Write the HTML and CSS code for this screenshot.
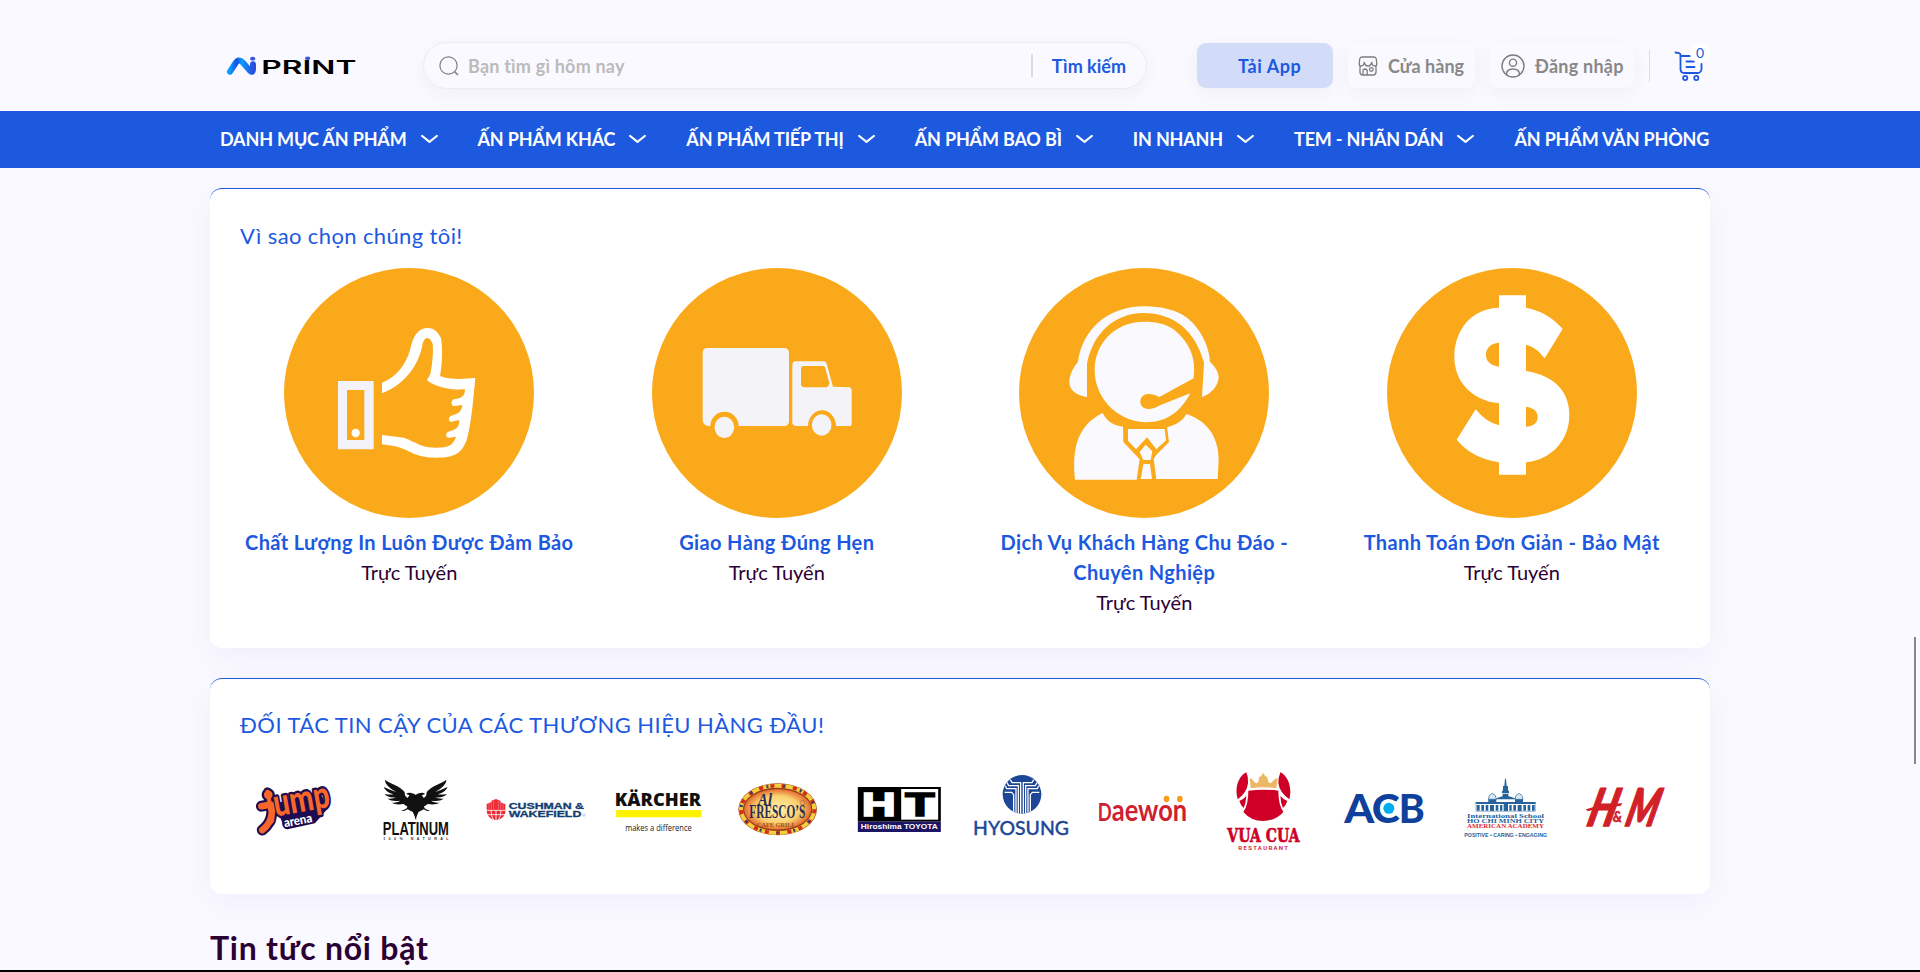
FILE: index.html
```html
<!DOCTYPE html>
<html lang="vi">
<head>
<meta charset="utf-8">
<title>AiPrint</title>
<link rel="stylesheet" href="styles.css">
</head>
<body>
<svg width="0" height="0" class="defs">
  <defs>
    <symbol id="chevron" viewBox="0 0 17 10"><path d="M1.2 2 L8.500 7.800 L15.800 2" fill="none" stroke="#fff" stroke-width="2.200" stroke-linecap="round" stroke-linejoin="round"/></symbol>
    <linearGradient id="mark" x1="0" y1="0" x2="1" y2="0"><stop offset="0" stop-color="#0a9cff"/><stop offset=".3" stop-color="#1450e0"/><stop offset=".5" stop-color="#0a9cff"/><stop offset="1" stop-color="#2a50e0"/></linearGradient>
  </defs>
</svg>

<header class="header">
  <div class="container header-row">
    <a class="logo">
      <svg width="132" height="20" viewBox="77 78 396 60">
        <path d="M89 125 L105 100 Q115 84 128 98 L149 122 Q158 130 158 118 L158 103" fill="none" stroke="url(#mark)" stroke-width="18" stroke-linecap="round" stroke-linejoin="round"/>
        <ellipse cx="157" cy="86" rx="8" ry="5.500" fill="#3a55dd"/>
        <text x="183" y="132" class="logo-text" textLength="285" lengthAdjust="spacingAndGlyphs">PRINT</text>
        <ellipse cx="322" cy="85" rx="8" ry="5.500" fill="#3a55dd"/>
      </svg>
    </a>
    <div class="search">
      <svg width="20" height="20" viewBox="0 0 20 20" fill="none" stroke="#808080" stroke-width="1.2"><circle cx="9.5" cy="9.5" r="8.6"/><path d="M15.5 15.5 L19 19" stroke-width="1.6"/></svg>
      <span class="placeholder">Bạn tìm gì hôm nay</span>
      <span class="search-divider"></span>
      <span class="search-button">Tìm kiếm</span>
    </div>
    <div class="actions">
      <a class="button button-app">Tải App</a>
      <a class="button button-store">
        <svg width="20" height="20" viewBox="0 0 20 20" fill="none" stroke="#7d7d7d" stroke-width="1.3"><path d="M4 1 H16 Q18 1 18.3 3 L18.8 8 Q18.8 10 17 10 M4 1 Q2 1 1.7 3 L1.2 8 Q1.2 10 3 10 M2 9 V16 Q2 19 5 19 H15 Q18 19 18 16 V9"/><path d="M3 10 Q6 10 6.2 6 Q7 10 10 10 Q13 10 13.8 6 Q14 10 17 10"/><path d="M5 19 V15.5 Q5 13 7 13 Q9.200 13 9.200 15.500 V19"/><circle cx="13.300" cy="13.500" r="1.800"/></svg>
        Cửa hàng
      </a>
      <a class="button button-login">
        <svg width="24" height="24" viewBox="0 0 24 24" fill="none" stroke="#7d7d7d" stroke-width="1.4"><circle cx="12" cy="12" r="11"/><circle cx="12" cy="8.700" r="3.600"/><path d="M5.500 20.500 Q5.500 15 12 15 Q18.500 15 18.500 20.500"/></svg>
        <span>Đăng nhập</span>
      </a>
      <span class="action-divider"></span>
      <a class="cart">
        <svg width="30" height="30" viewBox="0 0 30 30" fill="none" stroke="#1c59df" stroke-width="1.8" stroke-linecap="round"><path d="M1.500 1.500 L5 2.200 Q6.500 2.500 6.500 4 V18 Q6.500 22 10.500 22 H23.500 Q27 22 27.500 18 V13"/><path d="M6.500 5 H16"/><path d="M12.500 10.500 H20 M12.500 16 H20.500"/><circle cx="11.200" cy="27" r="2.100"/><circle cx="22.300" cy="27" r="2.100"/></svg>
        <span class="badge">0</span>
      </a>
    </div>
  </div>
</header>

<nav class="nav">
  <div class="container nav-row">
    <a class="nav-item">DANH MỤC ẤN PHẨM<svg width="17" height="10"><use href="#chevron"/></svg></a>
    <a class="nav-item">ẤN PHẨM KHÁC<svg width="17" height="10"><use href="#chevron"/></svg></a>
    <a class="nav-item">ẤN PHẨM TIẾP THỊ<svg width="17" height="10"><use href="#chevron"/></svg></a>
    <a class="nav-item">ẤN PHẨM BAO BÌ<svg width="17" height="10"><use href="#chevron"/></svg></a>
    <a class="nav-item">IN NHANH<svg width="17" height="10"><use href="#chevron"/></svg></a>
    <a class="nav-item">TEM - NHÃN DÁN<svg width="17" height="10"><use href="#chevron"/></svg></a>
    <a class="nav-item">ẤN PHẨM VĂN PHÒNG</a>
  </div>
</nav>

<main class="container">
  <section class="card">
    <h2 class="card-title">Vì sao chọn chúng tôi!</h2>
    <div class="features">
      <article class="feature">
        <svg width="250" height="250" viewBox="252 264 750 750">
          <circle cx="627" cy="639" r="375" fill="#faa91b"/>
          <path fill="#f3f2f8" fill-rule="evenodd" d="M414 603 H521 V808 H414Z M441 630 V780 H493 V630Z"/>
          <circle cx="467" cy="759" r="12.500" fill="#fff"/>
          <path fill="#fff" d="M546 608 C590 590 617 555 630 510 C640 465 655 444 684 444 C703 444 715 458 723 474 C729 505 726 560 720 588 C750 600 790 597 826 594 C818 680 812 740 800 780 C785 820 765 833 710 833 C625 833 640 802 546 793 V765 L612 773 C650 788 665 803 710 803 C745 803 760 795 768 770 C755 771 748 775 742 772 C736 768 738 758 745 755 C765 750 778 745 778 721 C765 722 757 727 751 725 C744 720 746 710 754 707 C772 701 785 698 787 675 C775 675 765 680 758 677 C752 670 755 660 762 658 C785 655 795 648 795 628 C750 631 710 620 682 602 C680 595 690 592 692 577 C698 550 700 510 698 492 C690 468 675 468 668 490 C660 550 615 615 546 640Z"/>
        </svg>
        <h3>Chất Lượng In Luôn Được Đảm Bảo</h3>
        <p>Trực Tuyến</p>
      </article>
      <article class="feature">
        <svg width="250" height="250" viewBox="96 54 750 750">
          <circle cx="471" cy="429" r="375" fill="#faa91b"/>
          <g fill="#f4f4f8">
            <path d="M262 294 H492 Q507 294 507 309 V514 Q507 528 492 528 H356 A42 42 0 0 0 271 528 H264 Q248 526 248 508 V309 Q248 294 262 294Z"/>
            <ellipse cx="313" cy="532" rx="29.500" ry="32"/>
            <path fill-rule="evenodd" d="M527 334 H611 Q617 334 620 341 L639 410 L688 412 Q695 413 695 420 V522 Q695 528 690 528 H648 A42 47 0 0 0 564 528 H528 Q517 528 517 516 V346 Q517 334 527 334Z M551 348 Q543 348 543 356 V405 Q546 410 552 412 H619 Q627 409 628 398 L615 352 Q613 348 608 348Z"/>
            <ellipse cx="605" cy="525" rx="29.500" ry="32"/>
          </g>
        </svg>
        <h3>Giao Hàng Đúng Hẹn</h3>
        <p>Trực Tuyến</p>
      </article>
      <article class="feature">
        <svg width="250" height="250" viewBox="117 54 750 750">
          <circle cx="492" cy="429" r="375" fill="#faa91b"/>
          <g fill="#faf9fe">
            <path d="M321 441 C290 438 268 420 268 397 C268 375 278 355 294 335 C308 240 380 169 493 169 C545 169 590 180 623 205 C660 235 687 285 690 335 C705 350 716 365 716 383 C714 408 695 430 666 441 L672 338 C645 240 580 189 490 189 C405 189 338 250 321 342Z"/>
            <path d="M493 215 C530 215 555 222 575 234 C625 270 650 320 641 385 L538 441 C510 426 481 430 481 456 C483 482 515 482 540 466 L631 430 C605 480 565 517 497 517 C405 512 344 440 344 360 C344 285 400 215 493 215Z"/>
            <path d="M368 489 C380 515 400 526 429 530 L430 576 L479 628 L470 689 H285 C275 590 295 525 368 489Z"/>
            <path d="M619 492 C690 515 716 570 716 630 L713 687 H529 L521 627 C530 610 550 595 567 576 L561 532 C590 525 610 510 619 492Z"/>
            <path d="M444 537 H554 L558 571 L529 598 L501 562 L468 598 L444 572Z M497 584 L517 604 L512 630 H490 L479 606Z M490 642 H510 L516 687 H482Z"/>
          </g>
        </svg>
        <h3>Dịch Vụ Khách Hàng Chu Đáo - Chuyên Nghiệp</h3>
        <p>Trực Tuyến</p>
      </article>
      <article class="feature">
        <svg width="250" height="250" viewBox="141 54 750 750">
          <circle cx="516" cy="429" r="375" fill="#faa91b"/>
          <path fill="#fff" fill-rule="evenodd" d="M477 136 H558 V173 Q625 186 668 237 L614 325 Q590 292 558 284 V363 C650 378 688 430 688 495 C688 575 630 630 558 637 V674 H477 V637 Q395 624 350 569 L407 478 Q437 516 477 526 V460 C390 450 343 390 343 320 C343 240 395 175 477 173Z M477 278 C450 280 438 295 438 315 C438 335 452 346 477 350Z M558 470 C580 473 593 483 593 501 C593 519 580 529 558 530Z"/>
        </svg>
        <h3>Thanh Toán Đơn Giản - Bảo Mật</h3>
        <p>Trực Tuyến</p>
      </article>
    </div>
  </section>

  <section class="card partners-card">
    <h2 class="card-title partners-title">ĐỐI TÁC TIN CẬY CỦA CÁC THƯƠNG HIỆU HÀNG ĐẦU!</h2>
    <div class="partners">
      <!-- Jump Arena -->
      <svg viewBox="120 360 332.500 300">
        <path d="M222 492 L358 452 L384 505 L345 550 L262 568 Q246 566 246 545Z" fill="#1d0c4f"/>
        <g class="jump" transform="rotate(-10 280 500)">
          <circle cx="212" cy="452" r="20" fill="#1d0c4f"/>
          <path d="M186 482 H214 V505 Q206 538 176 553" fill="none" stroke="#1d0c4f" stroke-width="33" stroke-linecap="round" stroke-linejoin="round"/>
          <text x="200" y="520" font-size="112" textLength="192" lengthAdjust="spacingAndGlyphs">jump</text>
          <path d="M186 482 H214 V505 Q206 538 176 553" fill="none" stroke="#f8662a" stroke-width="20" stroke-linecap="round" stroke-linejoin="round"/>
          <circle cx="212" cy="452" r="13" fill="#f8662a"/>
        </g>
        <text x="254" y="562" class="arena" transform="rotate(-11 254 562)" textLength="86" lengthAdjust="spacingAndGlyphs">arena</text>
      </svg>
      <!-- Platinum -->
      <svg viewBox="482.500 360 332.500 300">
        <g fill="#111">
          <path id="wing" d="M648 540 L638 516 L622 508 Q612 516 603 511 Q618 510 622 500 L610 492 Q588 496 574 488 Q592 488 600 482 Q575 486 562 476 Q580 477 588 472 Q562 474 553 462 Q568 465 580 463 Q555 456 551 441 Q570 450 588 456 Q555 438 554 419 Q566 428 582 434 Q606 444 614 458 Q612 466 622 474 L628 466 L618 462 Q624 456 633 459 Q642 460 648 466Z"/>
          <use href="#wing" transform="translate(1293 0) scale(-1 1)"/>
        </g>
        <text x="548" y="585" class="platinum" textLength="198" lengthAdjust="spacingAndGlyphs">PLATINUM</text>
        <text x="549" y="600" class="platinum-sub" textLength="196">100% NATURAL</text>
      </svg>
      <!-- Cushman & Wakefield -->
      <svg viewBox="845 360 332.500 300">
        <path fill="#ee2a35" d="M859 508 V492 L873 486 V482 L887 477 L901 483 V487 L915 493 V508 C918 525 905 540 887 540 S858 525 859 508Z"/>
        <path d="M866 490 V508 M873 484 V508 M880 481 V508 M894 482 V508 M901 484 V508 M908 490 V508" stroke="#fff" stroke-width="1.200" opacity=".7"/>
        <path d="M858 511 H917 M861 524 H914 M872 511 Q872 530 880 540 M887 511 V540 M902 511 Q902 530 894 540" stroke="#fff" stroke-width="2.500" fill="none"/>
        <text x="925" y="507" class="cushman" textLength="226" lengthAdjust="spacingAndGlyphs">CUSHMAN &amp;</text>
        <text x="925" y="532" class="cushman" textLength="218" lengthAdjust="spacingAndGlyphs">WAKEFIELD</text>
        <text x="1146" y="531" font-size="12" fill="#5b80a5">®</text>
      </svg>
      <!-- Kärcher -->
      <svg viewBox="1207.500 360 332.500 300">
        <text x="1243" y="498" class="karcher" textLength="259" lengthAdjust="spacingAndGlyphs">KÄRCHER</text>
        <rect x="1247" y="510" width="256" height="22" fill="#fff200"/>
        <text x="1274" y="573" class="karcher-sub" textLength="200" lengthAdjust="spacingAndGlyphs">makes a difference</text>
      </svg>
      <!-- Al Fresco's -->
      <svg viewBox="40 30 332.500 300">
        <defs><radialGradient id="fresco"><stop offset="0" stop-color="#fff3a8"/><stop offset=".65" stop-color="#fad070"/><stop offset="1" stop-color="#e2682a"/></radialGradient></defs>
        <ellipse cx="204" cy="178" rx="118" ry="78" fill="#a3431f"/>
        <ellipse cx="204" cy="178" rx="110" ry="71" fill="none" stroke="#f3cf3c" stroke-width="12"/>
        <ellipse cx="204" cy="178" rx="110" ry="71" fill="none" stroke="#d52b1e" stroke-width="11" stroke-dasharray="12 22"/>
        <ellipse cx="204" cy="178" rx="110" ry="71" fill="none" stroke="#34406e" stroke-width="9" stroke-dasharray="6 45" stroke-dashoffset="12"/>
        <ellipse cx="204" cy="178" rx="102" ry="62" fill="url(#fresco)" stroke="#7e2f18" stroke-width="2"/>
        <text x="145" y="165" class="fresco" font-size="52" font-style="italic" textLength="42" lengthAdjust="spacingAndGlyphs">Al</text>
        <text x="119" y="204" class="fresco" font-size="54" textLength="168" lengthAdjust="spacingAndGlyphs">FRESCO’S</text>
        <text x="142" y="231" class="fresco-sub" textLength="116">CAFE GRILL</text>
        <circle cx="279" cy="158" r="7" fill="none" stroke="#8b5a35" stroke-width="1.500"/>
      </svg>
      <!-- Hiroshima Toyota -->
      <svg viewBox="402.500 30 332.500 300">
        <rect x="444" y="111" width="249" height="104" fill="#000"/>
        <rect x="444" y="215" width="249" height="31" fill="#1c1464"/>
        <rect x="574" y="117" width="111" height="92" fill="#fff"/>
        <text x="456" y="197" class="ht" fill="#fff" stroke="#fff" textLength="102" lengthAdjust="spacingAndGlyphs">H</text>
        <text x="586" y="197" class="ht" fill="#000" stroke="#000" textLength="88" lengthAdjust="spacingAndGlyphs">T</text>
        <text x="453" y="238" class="toyota" textLength="231" lengthAdjust="spacingAndGlyphs">Hiroshima TOYOTA</text>
      </svg>
      <!-- Hyosung -->
      <svg viewBox="765 30 332.500 300">
        <clipPath id="globe"><circle cx="936" cy="133" r="58"/></clipPath>
        <circle cx="936" cy="133" r="58" fill="#1d4796"/>
        <g clip-path="url(#globe)" fill="none" stroke="#fff" stroke-width="3.800">
          <path d="M932 192 V98 H906 L901 89 M925 192 V107 H896 L891 98 M918 192 V116 H890 L886 107 M911 192 V134 L905 127 H884"/>
          <path d="M940 192 V98 H966 L971 89 M947 192 V107 H976 L981 98 M954 192 V116 H982 L986 107 M961 192 V134 L967 127 H988"/>
        </g>
        <text x="789" y="256" class="hyosung" textLength="288" lengthAdjust="spacingAndGlyphs">HYOSUNG</text>
      </svg>
      <!-- Daewon -->
      <svg viewBox="17.500 30 332.500 300">
        <text x="53" y="214" class="daewon" font-size="72" textLength="42" lengthAdjust="spacingAndGlyphs">D</text>
        <text x="95" y="214" class="daewon" font-size="94" textLength="226" lengthAdjust="spacingAndGlyphs">aewon</text>
        <ellipse cx="259" cy="147" rx="8.500" ry="9.500" fill="#f99b1c"/><ellipse cx="299" cy="147" rx="8.500" ry="9.500" fill="#f99b1c"/>
      </svg>
      <!-- Vua Cua -->
      <svg viewBox="380 30 332.500 300">
        <g fill="#ce0027">
          <path d="M498 67 C474 78 462 115 472 148 Q500 128 503 100 Q504 82 498 67Z M600 67 C624 78 636 115 627 148 Q598 128 594 100 Q594 82 600 67Z"/>
          <path d="M504 122 Q548 116 594 122 Q594 165 609 186 Q585 213 548 213 Q512 213 489 186 Q504 165 504 122Z"/>
          <path d="M477 153 Q488 149 498 138 Q497 160 490 174 Q481 166 477 153Z M621 153 Q610 149 600 138 Q601 160 608 174 Q617 166 621 153Z"/>
        </g>
        <path fill="#edb765" d="M511 115 L508 84 Q516 86 522 96 Q528 103 534 96 Q536 86 536 82 Q544 78 548 68 Q553 78 561 82 Q561 92 566 98 Q572 102 577 94 Q584 85 592 84 L588 115 Q548 109 511 115Z"/>
        <text x="441" y="275" class="vua" textLength="217" lengthAdjust="spacingAndGlyphs">VUA CUA</text>
        <text x="474" y="299" class="vua-sub" textLength="149">RESTAURANT</text>
      </svg>
      <!-- ACB -->
      <svg viewBox="742.500 30 332.500 300">
        <text x="791" y="218" class="acb" textLength="90" lengthAdjust="spacingAndGlyphs">A</text>
        <text x="955" y="218" class="acb" textLength="78" lengthAdjust="spacingAndGlyphs">B</text>
        <text x="874" y="218" class="acb" textLength="84" lengthAdjust="spacingAndGlyphs">C</text>
        <circle cx="925" cy="175" r="16.500" fill="#00aeef"/>
      </svg>
      <!-- International School -->
      <svg viewBox="55 30 332.500 300">
        <g fill="#25639a">
          <path d="M226 86 H229 L231 108 H235 V122 H238 V130 H217 V122 H220 V108 H224Z M219 132 H236 V146 H219Z"/>
          <path d="M176 148 Q176 134 188 130 Q200 134 200 148Z M256 148 Q256 134 268 130 Q280 134 280 148Z" fill="#dce9f4" stroke="#25639a" stroke-width="2"/>
          <path d="M200 145 L228 136 L256 145 V156 H280 V148 H176 V156 H200Z"/>
          <path d="M138 156 H318 V162 H138Z M141 165 H150 V182 H141Z M155 165 H163 V182 H155Z M168 165 H176 V182 H168Z M181 165 H193 V183 H181Z M198 165 H206 V182 H198Z M211 165 H218 V182 H211Z M222 160 H235 V183 H222Z M239 165 H246 V182 H239Z M251 165 H259 V182 H251Z M264 165 H276 V183 H264Z M281 165 H289 V182 H281Z M294 165 H302 V182 H294Z M307 165 H315 V182 H307Z"/>
        </g>
        <path d="M139 156 V184 H317 V156" fill="none" stroke="#6f9bc2" stroke-width="2"/>
        <g class="school">
          <text x="112" y="203" textLength="231" lengthAdjust="spacingAndGlyphs" font-size="20">International School</text>
          <text x="112" y="219" textLength="231" lengthAdjust="spacingAndGlyphs">HO CHI MINH CITY</text>
          <text x="112" y="235" textLength="231" lengthAdjust="spacingAndGlyphs" class="academy">AMERICAN ACADEMY</text>
        </g>
        <text x="104" y="260" class="school-sub" textLength="248" lengthAdjust="spacingAndGlyphs">POSITIVE • CARING • ENGAGING</text>
      </svg>
      <!-- H&M -->
      <svg viewBox="417.500 30 332.500 300">
        <g class="hm">
          <text transform="translate(467 229) skewX(-15) scale(.74 1)" font-size="156">H</text>
          <text transform="translate(549 215) scale(.9 1)" font-size="46" stroke-width="1">&amp;</text>
          <text transform="translate(582 229) skewX(-15) scale(.67 1)" font-size="156">M</text>
        </g>
        <path d="M468 178 Q520 160 578 160 L572 168 Q520 170 474 184Z" fill="#d22027"/>
      </svg>
    </div>
  </section>

  <h1 class="news-title">Tin tức nổi bật</h1>
</main>
<div class="scroll-thumb"></div>
<div class="bottom-edge"></div>
</body>
</html>
```
FILE: styles.css
```css
* { box-sizing: border-box; }
body {
  margin: 0;
  height: 972px;
  overflow: hidden;
  background: #faf9ff;
  color: #2b0033;
  font-family: Lato, "Noto Sans", sans-serif;
  font-size: 18px;
}
h1, h2, h3, p { margin: 0; }
svg { overflow: visible; flex-shrink: 0; }
.defs { position: absolute; }
.container { width: 1500px; margin: 0 auto; }

.header { height: 111px; padding-top: 42px; }
.header-row { display: flex; align-items: center; height: 47px; padding-left: 16px; }
.logo { width: 197px; height: 20px; display: flex; }
.logo-text { font-family: Inter, sans-serif; font-weight: 600; font-size: 54px; fill: #000; }
.search {
  display: flex;
  align-items: center;
  width: 724px;
  height: 47px;
  padding: 0 20px 0 15px;
  border: 1px solid #ececef;
  border-radius: 24px;
  box-shadow: 0 5px 20px rgba(0, 0, 0, .045);
  font-weight: 700;
}
.placeholder { flex: 1; margin-left: 9px; color: #bbb; letter-spacing: .2px; }
.search-divider { width: 2px; height: 23px; background: #dcdcdc; margin-right: 19px; }
.search-button { color: #1c59df; }
.actions { display: flex; align-items: center; margin-left: 50px; }
.button {
  display: flex;
  align-items: center;
  height: 45px;
  border-radius: 9px;
  color: #888;
  font-weight: 700;
  box-shadow: 0 5px 20px rgba(0, 0, 0, .045);
  white-space: nowrap;
}
.button-app { width: 136px; padding-left: 41px; background: #d2dcf9; color: #1c59df; letter-spacing: .6px; }
.button-store { width: 127px; margin-left: 15px; padding-left: 10px; gap: 10px; }
.button-login { width: 144px; margin-left: 15px; padding-left: 11px; gap: 10px; letter-spacing: .25px; }
.action-divider { width: 1px; height: 32px; margin-left: 15px; background: #dcdce2; }
.cart { position: relative; width: 30px; height: 30px; margin-left: 24px; }
.cart svg { display: block; }
.badge {
  position: absolute;
  left: 16px;
  top: -8px;
  width: 20px;
  height: 20px;
  border-radius: 50%;
  background: #fff;
  color: #1c59df;
  font-size: 14px;
  line-height: 20px;
  text-align: center;
}

.nav { height: 57px; background: #1c59df; }
.nav-row { display: flex; align-items: center; height: 55px; padding-left: 10px; gap: 40px; overflow: hidden; }
.nav-item { display: flex; align-items: center; gap: 14px; color: #fff; font-weight: 700; letter-spacing: -.17px; white-space: nowrap; }

.card {
  margin-top: 20px;
  padding: 30px 30px 31px;
  background: #fff;
  border-top: 1px solid #1c59df;
  border-radius: 12px;
  box-shadow: 0 10px 30px rgba(70, 40, 180, .05);
}
.card-title { color: #1c59df; font-size: 22px; font-weight: 400; line-height: 33px; letter-spacing: .38px; margin-bottom: 16px; }
.features { display: grid; grid-template-columns: repeat(4, 1fr); column-gap: 31px; padding-left: 1px; }
.feature { text-align: center; font-size: 20px; line-height: 30px; }
.feature svg { display: block; margin: 0 auto 9px; }
.feature h3 { color: #1c59df; font-size: 20px; font-weight: 700; letter-spacing: .38px; }

.partners-card { margin-top: 30px; padding-bottom: 34px; }
.partners-title { line-height: 32px; margin-bottom: 19px; letter-spacing: .44px; }
.partners { display: grid; grid-template-columns: repeat(12, 1fr); gap: 10px; }
.partners svg { display: block; width: 100%; height: 100px; }

.jump text { font-family: Lato, sans-serif; font-weight: 900; fill: #f8662a; stroke: #1d0c4f; stroke-width: 14px; paint-order: stroke; stroke-linejoin: round; }
.arena { font-family: Lato, sans-serif; font-weight: 900; font-size: 38px; fill: #fff; }
.platinum { font-family: "Liberation Sans", sans-serif; font-weight: 700; font-size: 57px; fill: #111; }
.platinum-sub { font-family: "Liberation Sans", sans-serif; font-weight: 700; font-size: 11px; fill: #333; }
.cushman { font-family: "Liberation Sans", sans-serif; font-weight: 700; font-size: 29px; fill: #123e73; stroke: #123e73; stroke-width: 1px; }
.karcher { font-family: "Open Sans", sans-serif; font-weight: 800; font-size: 51px; fill: #111; }
.karcher-sub { font-family: "Open Sans", sans-serif; font-size: 25px; fill: #222; }
.fresco { font-family: "Liberation Serif", serif; font-weight: 700; fill: #2b2d55; }
.fresco-sub { font-family: "Liberation Serif", serif; font-weight: 700; font-size: 19px; fill: #9a5527; }
.ht { font-family: "Liberation Sans", sans-serif; font-weight: 700; font-size: 98px; stroke-width: 5px; }
.toyota { font-family: "Liberation Sans", sans-serif; font-weight: 700; font-size: 22px; fill: #fff; }
.hyosung { font-family: Lato, sans-serif; font-weight: 500; font-size: 58px; fill: #1d4796; stroke: #1d4796; stroke-width: 1px; }
.daewon { font-family: Lato, sans-serif; font-weight: 700; fill: #d01f30; }
.vua { font-family: "DejaVu Serif", serif; font-weight: 700; font-size: 57px; fill: #ce0027; stroke: #ce0027; stroke-width: 2px; }
.vua-sub { font-family: Roboto, sans-serif; font-weight: 500; font-size: 18px; fill: #ce0027; }
.acb { font-family: Lato, sans-serif; font-weight: 900; font-size: 119px; fill: #0f419c; }
.school { font-family: "Liberation Serif", serif; font-weight: 700; font-size: 18px; fill: #25639a; }
.academy { fill: #e02a35; }
.school-sub { font-family: "Liberation Sans", sans-serif; font-weight: 700; font-size: 16px; fill: #25639a; }
.hm { font-family: Lato, sans-serif; font-weight: 900; font-style: italic; fill: #d22027; stroke: #d22027; stroke-width: 5px; stroke-linejoin: round; }

.news-title { margin-top: 34px; font-size: 32px; font-weight: 700; line-height: 40px; letter-spacing: .75px; }
.scroll-thumb { position: fixed; left: 1914px; top: 637px; width: 2px; height: 127px; background: #888; }
.bottom-edge { position: fixed; left: 0; right: 0; bottom: 0; height: 2px; background: #000; }
```
